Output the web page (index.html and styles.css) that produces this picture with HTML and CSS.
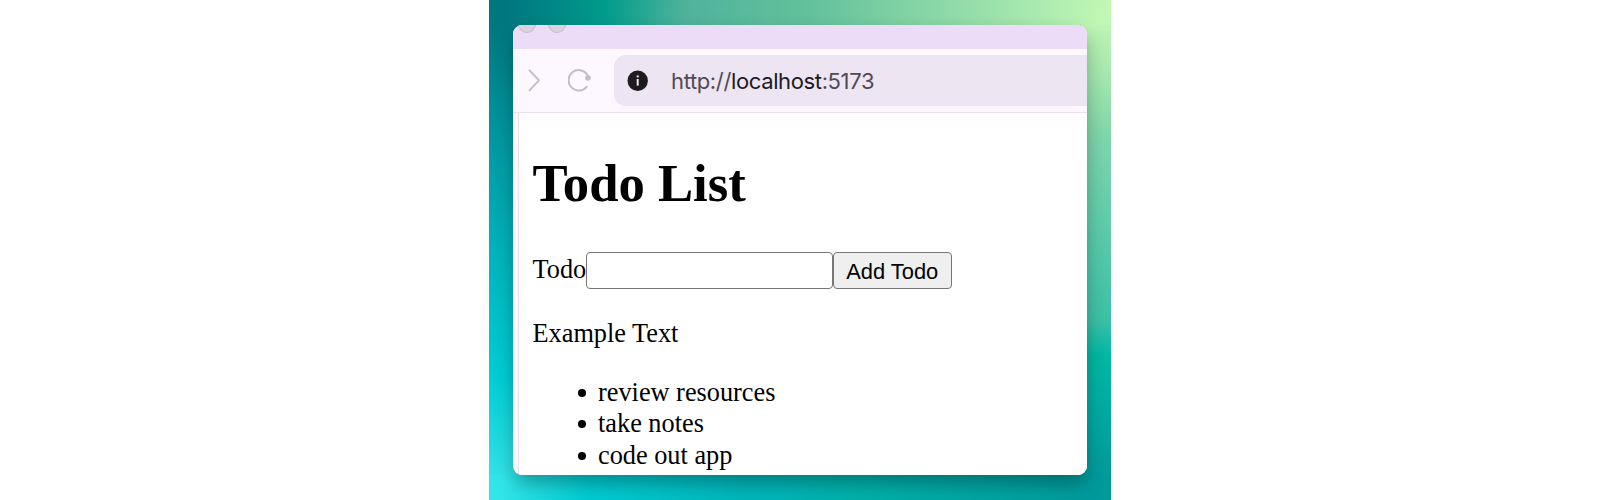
FILE: index.html
```html
<!DOCTYPE html>
<html lang="en">
<head>
<meta charset="utf-8">
<title>Todo List</title>
<link rel="stylesheet" href="styles.css">
</head>
<body>
<div class="stage">
  <div class="window">
    <div class="tabbar">
      <span class="light"></span>
      <span class="light"></span>
    </div>
    <div class="toolbar">
      <svg class="forward" width="14" height="24" viewBox="0 0 14 24"><path d="M2.5 2.4 L12 12.4 L2.5 22.4"/></svg>
      <svg class="reload" width="24" height="24" viewBox="0 0 24 24"><path d="M19.4 6.8 A10.2 10.2 0 1 0 18.6 18.8"/><circle cx="20" cy="9.8" r="2.9"/></svg>
      <div class="address">
        <svg class="info" width="21" height="21" viewBox="0 0 21 21"><circle cx="10.7" cy="10.7" r="10.2" fill="#1d1a20"/><rect x="9.7" y="9" width="2" height="6.6" fill="#eee6f3"/><rect x="9.7" y="5.4" width="2" height="2" fill="#eee6f3"/></svg>
        <span class="url">http://<span class="host">localhost</span>:5173</span>
      </div>
    </div>
    <main class="page">
      <h1 class="title">Todo List</h1>
      <form class="entry">
        <label class="label" for="todo">Todo</label><input class="field" id="todo" type="text"><button class="add" type="button">Add Todo</button>
      </form>
      <p class="text">Example Text</p>
      <ul class="list">
        <li class="item">review resources</li>
        <li class="item">take notes</li>
        <li class="item">code out app</li>
      </ul>
    </main>
  </div>
</div>
</body>
</html>
```

FILE: styles.css
```css
* { box-sizing: border-box; }
body { margin: 0; background: #fff; overflow: hidden; }
.stage {
  width: 622px;
  height: 500px;
  margin: 0 auto;
  padding: 25px 24px;
  overflow: hidden;
  background:
    linear-gradient(97deg, #00777f 20px, #009b8c 115px, #4fb39b 195px, #63c19c 320px, #92dca9 470px, #c0f7b4 612px) 0 0 / 622px 25px no-repeat,
    linear-gradient(180deg, #00777f 0, #009aa3 120px, #00b4bd 230px, #00cdd5 350px, #30e2e7 450px) 0 25px / 30px 450px no-repeat,
    linear-gradient(180deg, #bdf5b4 0, #a5e8af 50px, #7fd6aa 110px, #55c9aa 225px, #3cc1a6 295px, #00b8a5 330px, #00aaa2 390px, #009b9c 450px) 592px 25px / 30px 450px no-repeat,
    linear-gradient(90deg, #32e5e9 12px, #00cbd2 100px, #00b7bb 250px, #00b0a9 380px, #009a9c 598px);
}
.window {
  width: 574px;
  height: 450px;
  display: flex;
  flex-direction: column;
  overflow: hidden;
  border-radius: 9px;
  background: #fdf7ff;
  box-shadow: 0 9px 20px -2px rgba(0, 0, 0, .34);
}
.tabbar {
  flex: none;
  height: 24px;
  display: flex;
  gap: 12px;
  padding-left: 5px;
  background: #ecdcf7;
}
.light {
  width: 18px;
  height: 18px;
  margin-top: -10px;
  border: 1px solid #c4bbca;
  border-radius: 50%;
  background: #dad2df;
}
.toolbar {
  flex: none;
  height: 64px;
  display: flex;
  align-items: center;
  padding: 0 0 1px 14px;
  border-bottom: 1px solid #ecdfee;
}
.forward, .reload { fill: none; stroke: #c3bec7; stroke-width: 2; stroke-linecap: round; stroke-linejoin: round; }
.reload { margin-left: 27px; }
.reload circle { fill: #c3bec7; stroke: none; }
.address {
  flex: 1;
  height: 51px;
  margin-left: 22px;
  padding-left: 13px;
  display: flex;
  align-items: center;
  gap: 23px;
  border-radius: 12px 0 0 12px;
  background: #ede5f2;
}
.url { padding-top: 1px; font: 22px/28px Inter, sans-serif; letter-spacing: -.37px; color: #514a55; }
.host { color: #1d1a20; }
.page {
  flex: 1;
  margin-left: 5px;
  padding-left: 13.5px;
  border-left: 1px solid #ecdfee;
  background: #fff;
  color: #000;
  font: 26.3px/31.6px "Liberation Serif", serif;
}
.title { margin: 39px 0 0; font-size: 52.7px; line-height: 62px; }
.entry { display: flex; margin: 38.4px 0 0; height: 37px; }
.label { width: 53.5px; white-space: nowrap; line-height: 36px; }
.field { width: 247px; padding: 2px; border: 1.5px solid #767676; border-radius: 4px; background: #fff; }
.add {
  width: 118.5px;
  padding: 2px 0 0;
  border: 1.5px solid #767676;
  border-radius: 4px;
  background: #efefef;
  color: #000;
  font: 21.9px/32px "Liberation Sans", sans-serif;
}
.text { margin: 29px 0 0; }
.list { margin: 26.8px 0 0; padding-left: 45.5px; list-style: none; }
.item { display: flex; align-items: center; gap: 12px; }
.item::before {
  content: "";
  width: 8px;
  height: 8px;
  border-radius: 50%;
  background: #000;
}
```
